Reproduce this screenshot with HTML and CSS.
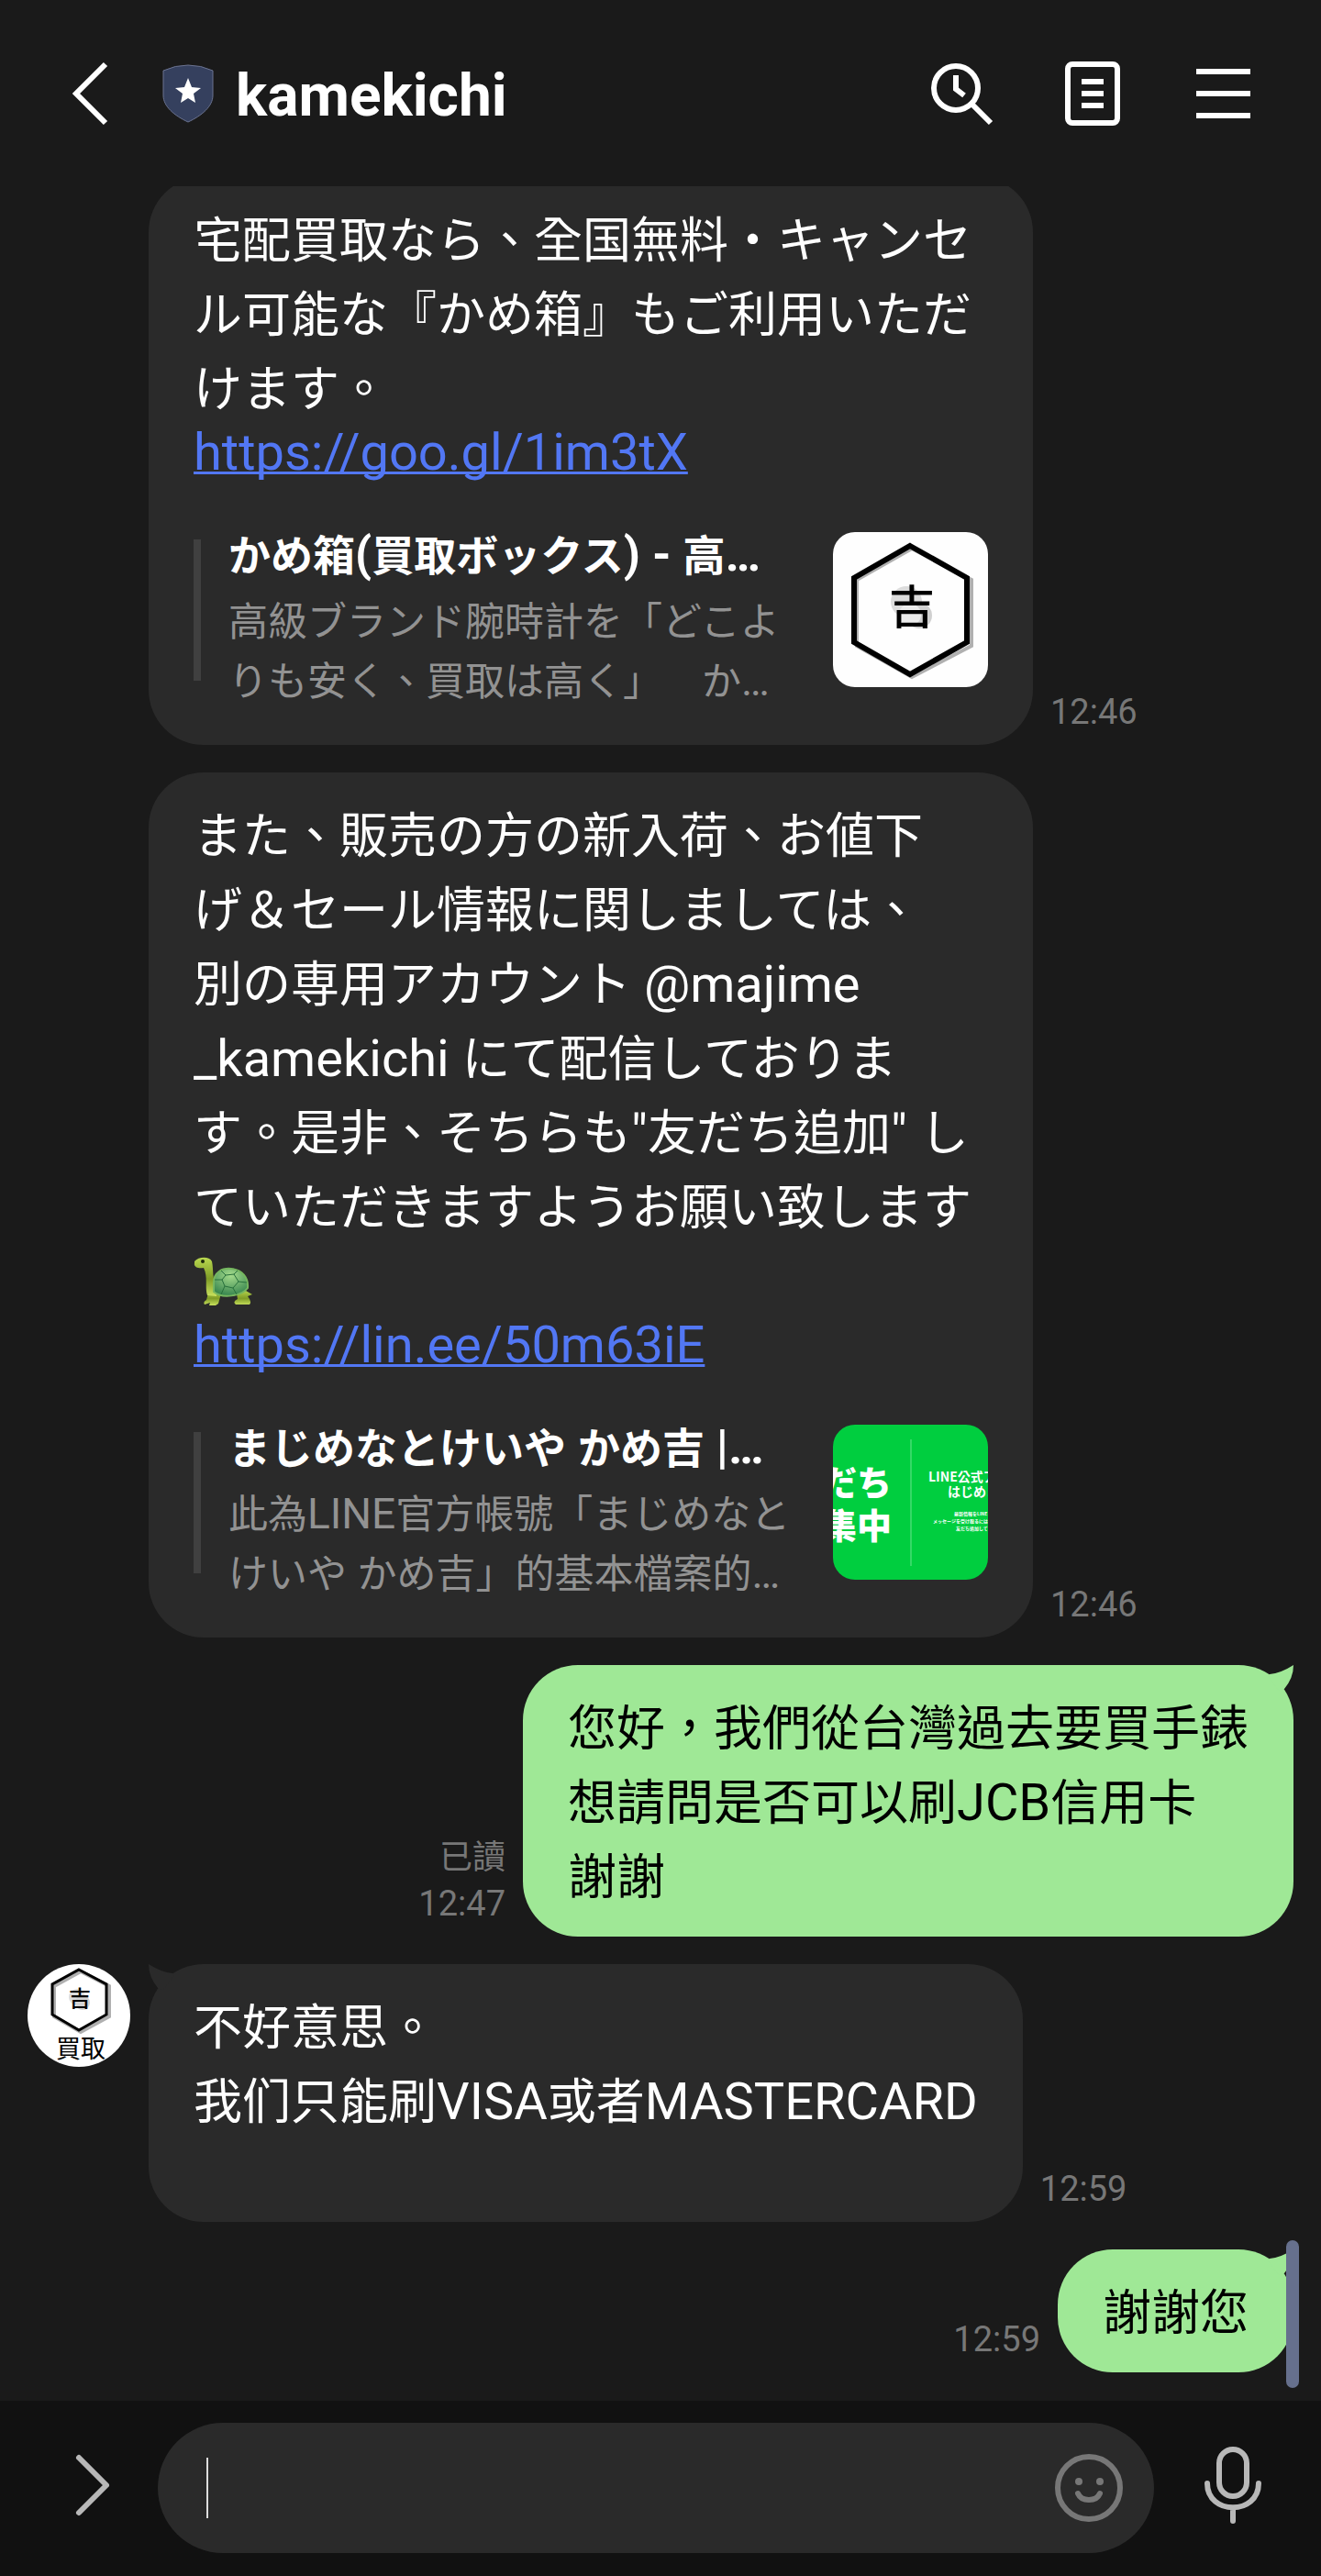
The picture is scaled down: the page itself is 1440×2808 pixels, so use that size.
FILE: index.html
```html
<!DOCTYPE html>
<html lang="zh-Hant">
<head>
<meta charset="utf-8">
<meta name="viewport" content="width=device-width, initial-scale=1">
<title>kamekichi</title>
<link rel="stylesheet" href="styles.css">
</head>
<body>
<header class="topbar">
  <button class="icon-btn" type="button" aria-label="Back">
    <svg width="50" height="72" viewBox="0 0 50 72" fill="none" stroke="#fff" stroke-width="6"><path d="M43 4 11 36 43 68"/></svg>
  </button>
  <svg class="shield" width="56" height="64" viewBox="0 0 56 64" aria-hidden="true">
    <path d="M1 7Q14 1 28 1T55 7V34C55 46 43 56 28 63 13 56 1 46 1 34Z" fill="#35405e" stroke="#6b7390"/>
    <path d="M28 15 32 25 42 26 34 32 36 42 28 37 20 42 22 32 14 26 24 25Z" fill="#fff"/>
  </svg>
  <h1 class="title">kamekichi</h1>
  <nav class="actions">
    <button class="icon-btn" type="button" aria-label="Search">
      <svg width="72" height="72" viewBox="0 0 72 72" fill="none" stroke="#fff" stroke-width="6"><circle cx="30" cy="30" r="24"/><path d="M30 16V31L39 38M48 48 68 68"/></svg>
    </button>
    <button class="icon-btn" type="button" aria-label="Notes">
      <svg width="72" height="72" viewBox="0 0 72 72" fill="none" stroke="#fff" stroke-width="6"><rect x="9" y="4" width="54" height="64" rx="5"/><path d="M24 23H48M24 36H48M24 49H48"/></svg>
    </button>
    <button class="icon-btn" type="button" aria-label="Menu">
      <svg width="72" height="72" viewBox="0 0 72 72" fill="none" stroke="#fff" stroke-width="6"><path d="M6 12H65M6 36H65M6 60H65"/></svg>
    </button>
  </nav>
</header>

<main class="chat">
  <section class="row">
    <article class="bubble wide">
      <p class="text">宅配買取なら、全国無料・キャンセ<br>ル可能な『かめ箱』もご利用いただ<br>けます。</p>
      <a class="link" href="https://goo.gl/1im3tX">https://goo.gl/1im3tX</a>
      <div class="preview">
        <div class="preview-text">
          <h2 class="preview-title">かめ箱<span class="latin">(</span>買取ボックス<span class="latin">) - </span>高<span class="latin">…</span></h2>
          <p class="preview-desc">高級ブランド腕時計を「どこよ<br>りも安く、買取は高く」　か<span class="latin">…</span></p>
        </div>
        <svg class="thumb" viewBox="0 0 169 169" role="img" aria-label="かめ箱">
          <rect width="169" height="169" fill="#fefefe"/>
          <path class="hex-shadow" d="M86 18 151 52V124L86 158 26 124V52Z"/>
          <path class="hex" d="M84 15 146 50V120L84 155 23 120V50Z"/>
          <circle cx="80" cy="76" r="17" fill="#dcdcdc"/><circle cx="94" cy="91" r="14" fill="#d0d0d0"/><circle cx="84" cy="90" r="12" fill="#ececec"/>
          <text class="mark mark-large" x="86" y="100">吉</text>
        </svg>
      </div>
    </article>
    <time class="meta">12:46</time>
  </section>

  <section class="row">
    <article class="bubble wide">
      <p class="text">また、販売の方の新入荷、お値下<br>げ＆セール情報に関しましては、<br>別の専用アカウント<span class="latin"> @majime</span><br><span class="latin">_kamekichi </span>にて配信しておりま<br>す。是非、そちらも<span class="latin">"</span>友だち追加<span class="latin">" </span>し<br>ていただきますようお願い致します<br><svg class="emoji" viewBox="0 0 64 54" role="img" aria-label="turtle">
        <defs>
          <linearGradient id="skin" x1="0" y1="0" x2="0" y2="1"><stop offset="0" stop-color="#b9d850"/><stop offset=".55" stop-color="#7f9c26"/><stop offset="1" stop-color="#c9e25e"/></linearGradient>
          <radialGradient id="shell" cx=".5" cy=".25" r=".8"><stop offset="0" stop-color="#a5dc8c"/><stop offset="1" stop-color="#2f7f4a"/></radialGradient>
        </defs>
        <path d="M12 52Q10 49 14 47L17 36 30 40 27 51 24 53H17L18 50ZM46 52Q42 49 48 46L47 40 57 37 64 41 59 43Q64 49 61 52Z" fill="url(#skin)"/>
        <path d="M1 5C5 0 17-1 20 5 22 14 20 24 25 32V43L15 42C12 33 16 22 11 12 5 13 0 11 1 7Z" fill="url(#skin)"/>
        <path d="M22 28C22 17 31 12 41 13 53 14 60 23 59 34 52 43 31 46 22 38Z" fill="url(#shell)" stroke="#75b65f" stroke-width="2"/>
        <path d="M35 20 44 19 49 27 43 34 34 32 31 25ZM35 20 30 15M44 19 48 15M49 27 58 28M43 34 47 41M34 32 30 41M31 25 23 25" fill="none" stroke="#28703c"/>
        <circle cx="10" cy="5" r="2" fill="#1d2a0b"/>
      </svg></p>
      <a class="link" href="https://lin.ee/50m63iE">https://lin.ee/50m63iE</a>
      <div class="preview">
        <div class="preview-text">
          <h2 class="preview-title">まじめなとけいや<span class="latin"> </span>かめ吉<span class="latin"> |…</span></h2>
          <p class="preview-desc">此為<span class="latin">LINE</span>官方帳號「まじめなと<br>けいや<span class="latin"> </span>かめ吉」的基本檔案的<span class="latin">…</span></p>
        </div>
        <svg class="thumb" viewBox="0 0 169 169" role="img" aria-label="LINE公式">
          <rect width="169" height="169" fill="#00ce3f"/>
          <path d="M85 16V154" stroke="#35d967" stroke-width="2"/>
          <g class="banner">
            <text class="banner-l" x="-12" y="77">だち</text>
            <text class="banner-l" x="-12" y="124">集中</text>
            <text class="banner-m" x="104" y="62">LINE公式ア</text>
            <text class="banner-m" x="125" y="78">はじめま</text>
            <text class="banner-s" x="132" y="99">最新情報をLINE</text>
            <text class="banner-s" x="109" y="107">メッセージを受け取るには</text>
            <text class="banner-s" x="134" y="115">友だち追加して</text>
          </g>
        </svg>
      </div>
    </article>
    <time class="meta">12:46</time>
  </section>

  <section class="row sent">
    <article class="bubble">
      <p class="text">您好，我們從台灣過去要買手錶<br>想請問是否可以刷<span class="latin">JCB</span>信用卡<br>謝謝</p>
      <svg class="tail" width="28" height="28" viewBox="0 0 28 28" aria-hidden="true"><path d="M0 12 2 10Q14 9 28 0 28 14 18 26L12 28Z"/></svg>
    </article>
    <div class="meta"><span class="read">已讀</span><time>12:47</time></div>
  </section>

  <section class="row with-avatar">
    <svg class="avatar" viewBox="0 0 113 113" role="img" aria-label="kamekichi">
      <circle cx="56" cy="56" r="56" fill="#fff"/>
      <path class="hex-shadow" d="M58 8 89 24V57L58 74 29 57V24Z"/>
      <path class="hex hex-thin" d="M56 6 86 22V55L56 72 27 55V22Z"/>
      <circle cx="54" cy="36" r="9" fill="#dcdcdc"/><circle cx="60" cy="42" r="8" fill="#d4d4d4"/>
      <text class="mark mark-small" x="57" y="46">吉</text>
      <text class="mark mark-label" x="58" y="102">買取</text>
    </svg>
    <article class="bubble">
      <p class="text">不好意思。<br>我们只能刷<span class="latin">VISA</span>或者<span class="latin">MASTERCARD</span></p>
      <p class="blank"></p>
      <svg class="tail" width="28" height="28" viewBox="0 0 28 28" aria-hidden="true"><path d="M0 12 2 10Q14 9 28 0 28 14 18 26L12 28Z"/></svg>
    </article>
    <time class="meta">12:59</time>
  </section>

  <section class="row sent">
    <article class="bubble">
      <p class="text">謝謝您</p>
      <svg class="tail" width="28" height="28" viewBox="0 0 28 28" aria-hidden="true"><path d="M0 12 2 10Q14 9 28 0 28 14 18 26L12 28Z"/></svg>
    </article>
    <time class="meta">12:59</time>
  </section>
  <div class="scroll-thumb"></div>
</main>

<footer class="composer">
  <button class="icon-btn" type="button" aria-label="More">
    <svg width="48" height="72" viewBox="0 0 48 72" fill="none" stroke="#b8b8b8" stroke-width="6" stroke-linecap="round" stroke-linejoin="round"><path d="M8 6 38 36 8 66"/></svg>
  </button>
  <div class="field">
    <span class="caret"></span>
    <input class="input" type="text" aria-label="Message">
    <button class="icon-btn" type="button" aria-label="Stickers">
      <svg width="76" height="76" viewBox="0 0 76 76" fill="none" stroke="#777" stroke-width="6"><circle cx="38" cy="38" r="34"/><path d="M26 44Q29 51 38 51T50 44" stroke-linecap="round"/><g fill="#777" stroke="none"><circle cx="27" cy="31" r="4"/><circle cx="50" cy="31" r="4"/></g></svg>
    </button>
  </div>
  <button class="icon-btn" type="button" aria-label="Voice message">
    <svg width="64" height="86" viewBox="0 0 64 86" fill="none" stroke="#b8b8b8" stroke-width="6" stroke-linecap="round"><rect x="16" y="4" width="30" height="51" rx="15"/><path d="M3 41C3 76 59 76 59 41M31 68V82"/></svg>
  </button>
</footer>
</body>
</html>
```

FILE: styles.css
```css
* {
  box-sizing: border-box;
}

body {
  display: flex;
  flex-direction: column;
  min-height: 100vh;
  margin: 0;
  background: #1a1a1a;
  color: #fff;
  font-family: Roboto, "Noto Sans CJK TC", sans-serif;
  text-spacing-trim: space-all;
}

h1,
h2,
p {
  margin: 0;
}

svg {
  display: block;
  flex: none;
}

.icon-btn {
  flex: none;
  padding: 0;
  border: 0;
  background: none;
}

/* Header */
.topbar {
  position: relative;
  z-index: 1;
  display: flex;
  align-items: center;
  height: 203px;
  padding: 0 70px 0 72px;
  background: #1a1a1a;
}

.shield {
  margin: 0 24px 0 55px;
}

.title {
  padding-top: 6px;
  font-size: 64px;
  line-height: 76px;
}

.actions {
  display: flex;
  gap: 71px;
  margin-left: auto;
}

/* Messages */
.chat {
  position: relative;
  display: flex;
  flex: 1;
  flex-direction: column;
  gap: 30px;
  margin-top: -10px;
  padding: 0 30px 31px;
}

.row {
  display: flex;
  align-items: flex-end;
  gap: 19px;
  padding-left: 132px;
}

.row.with-avatar {
  padding-left: 0;
}

.row.sent {
  flex-direction: row-reverse;
  padding-left: 0;
}

.avatar {
  align-self: flex-start;
  width: 113px;
  height: 113px;
}

.bubble {
  position: relative;
  padding: 25px 49px 28px;
  border-radius: 60px;
  background: #2a2a2a;
}

.wide {
  width: 964px;
}

.sent .bubble {
  background: #9fe896;
  color: #000;
}

.tail {
  position: absolute;
  top: 0;
  right: 0;
  fill: #9fe896;
}

.with-avatar .tail {
  right: auto;
  left: 0;
  fill: #2a2a2a;
  transform: scaleX(-1);
}

.text {
  font-family: "Noto Sans CJK TC", sans-serif;
  font-size: 53px;
  line-height: 81px;
  white-space: nowrap;
}

.latin {
  font-family: Roboto, sans-serif;
  line-height: 1;
  white-space: pre;
}

.text .latin {
  font-size: 56px;
}

.blank {
  height: 66px;
}

.link {
  display: block;
  color: #5277f4;
  font-size: 56px;
  line-height: 64px;
  text-decoration-thickness: 3px;
  text-decoration-skip-ink: none;
}

.emoji {
  display: inline-block;
  width: 64px;
  height: 54px;
  vertical-align: -8px;
}

.meta {
  display: flex;
  flex-direction: column;
  align-items: flex-end;
  padding-bottom: 13px;
  color: #777;
  font-size: 38px;
  line-height: 46px;
}

.read {
  font-size: 36px;
  line-height: 54px;
}

/* Link preview */
.preview {
  display: flex;
  align-items: flex-start;
  padding: 43px 0 12px;
}

.preview::before {
  flex: none;
  width: 8px;
  height: 154px;
  margin: 20px 30px 0 0;
  background: #404040;
  content: "";
}

.preview-text {
  flex: 1;
  min-width: 0;
  font-family: "Noto Sans CJK TC", sans-serif;
  white-space: nowrap;
}

.preview-title {
  font-size: 46px;
  font-weight: 700;
  line-height: 68px;
}

.preview-title .latin {
  font-size: 52px;
}

.preview-desc {
  margin-top: 6px;
  color: #929292;
  font-size: 43px;
  line-height: 65px;
}

.preview-desc .latin {
  font-size: 46px;
}

.thumb {
  width: 169px;
  height: 169px;
  margin-top: 12px;
  border-radius: 24px;
}

.hex {
  fill: none;
  stroke: #000;
  stroke-width: 6px;
}

.hex-thin {
  stroke-width: 3px;
}

.hex-shadow {
  fill: none;
  stroke: #b0b0b0;
  stroke-width: 4px;
}

.mark {
  fill: #000;
  font-family: "Noto Sans CJK JP", sans-serif;
  font-weight: 500;
  text-anchor: middle;
}

.mark-large {
  font-size: 50px;
}

.mark-small {
  font-size: 24px;
}

.mark-label {
  font-size: 27px;
  font-weight: 400;
}

.banner {
  fill: #fff;
  font-family: "Noto Sans CJK JP", sans-serif;
  font-weight: 700;
}

.banner-l {
  font-size: 38px;
  font-weight: 900;
}

.banner-m {
  font-size: 14px;
}

.banner-s {
  font-size: 5px;
}

.scroll-thumb {
  position: absolute;
  right: 24px;
  bottom: 14px;
  width: 14px;
  height: 161px;
  border-radius: 7px;
  background: #66708d;
}

/* Composer */
.composer {
  display: flex;
  align-items: center;
  padding: 24px 63px 25px 78px;
  background: #111;
}

.composer > .icon-btn {
  padding-bottom: 6px;
}

.field {
  display: flex;
  flex: 1;
  align-items: center;
  height: 142px;
  margin: 0 55px 0 46px;
  padding: 0 33px 0 53px;
  border-radius: 71px;
  background: #2a2a2a;
}

.caret {
  flex: none;
  width: 2px;
  height: 66px;
  background: #ddd;
}

.input {
  flex: 1;
  min-width: 0;
  height: 80px;
  padding: 0;
  border: 0;
  outline: 0;
  background: none;
  color: #fff;
  font: 56px/80px Roboto, sans-serif;
}
```
